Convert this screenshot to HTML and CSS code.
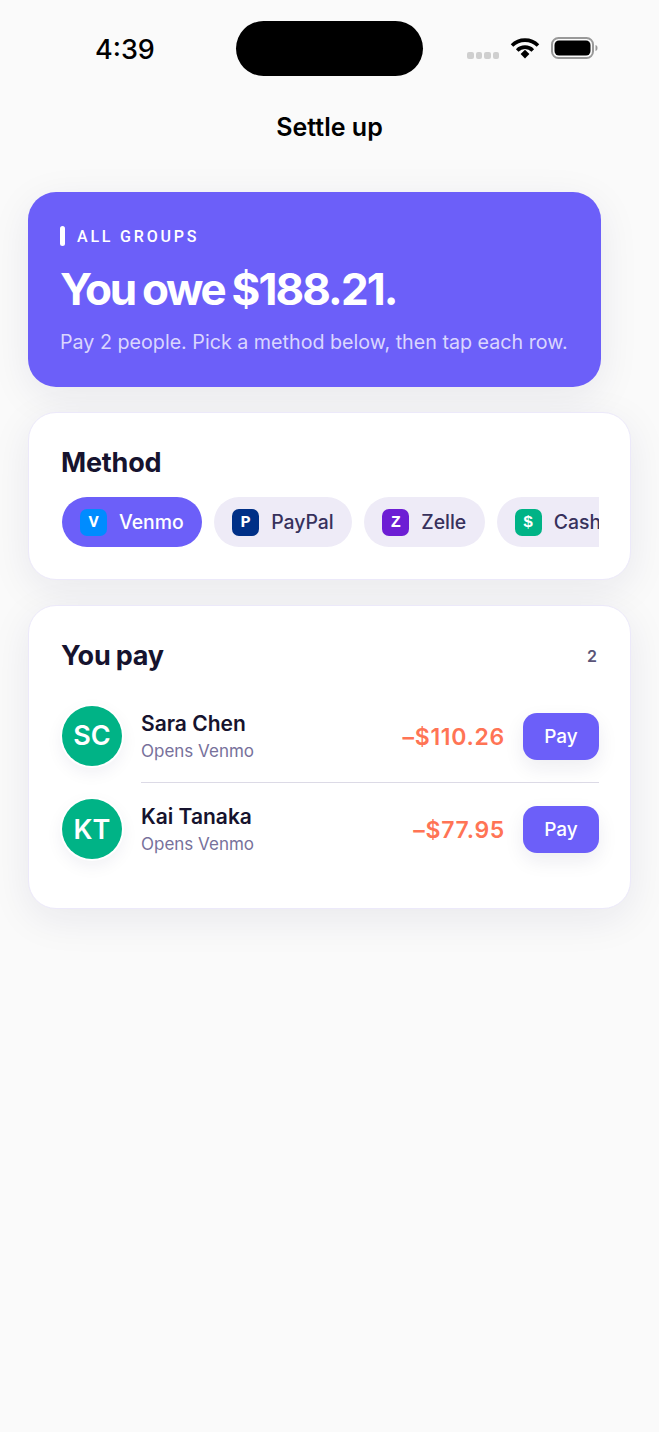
FILE: index.html
```html
<!DOCTYPE html>
<html>
<head>
    <meta charset="UTF-8">
    <title>Settle up</title>
    <link rel="stylesheet" href="styles.css">
</head>
<body>
    <div class="status-bar">
        <div class="status-time">4:39</div>
        <div class="status-island"></div>
        <div class="status-icons">
            <div class="signal-dots"><span></span><span></span><span></span><span></span></div>
            <svg class="wifi-icon" width="30" height="22" viewBox="0 0 30 22">
                <path d="M2 8.500a18.500 18.500 0 0 1 26 0" fill="none" stroke="#000" stroke-width="3.600"/>
                <path d="M7.200 13.400a11 11 0 0 1 15.600 0" fill="none" stroke="#000" stroke-width="3.600"/>
                <path d="M10.600 17l4.400-4.200 4.400 4.200L15 21.500z" fill="#000"/>
            </svg>
            <svg class="battery-icon" width="47" height="22" viewBox="0 0 47 22">
                <rect x="1" y="1" width="41" height="20" rx="6.500" fill="none" stroke="#999" stroke-width="2"/>
                <rect x="3.500" y="3.500" width="36" height="15" rx="4.500" fill="#000"/>
                <path d="M44.500 8c1.500.3 2 1.500 2 3s-.5 2.700-2 3z" fill="#999"/>
            </svg>
        </div>
    </div>

    <h1 class="page-title">Settle up</h1>

    <div class="page-content">
        <!-- Summary -->
        <div class="hero-card">
            <div class="hero-label"><span class="hero-tick"></span>ALL GROUPS</div>
            <div class="hero-amount">You owe <span class="hero-sum">$188.21.</span></div>
            <p class="hero-note">Pay 2 people. Pick a method below, then tap each row.</p>
        </div>

        <!-- Payment method -->
        <div class="panel method-panel">
            <h2 class="panel-title">Method</h2>
            <div class="method-list">
                <div class="method-pill method-active"><span class="method-icon venmo">V</span>Venmo</div>
                <div class="method-pill"><span class="method-icon paypal">P</span>PayPal</div>
                <div class="method-pill"><span class="method-icon zelle">Z</span>Zelle</div>
                <div class="method-pill"><span class="method-icon cash">$</span>Cash App</div>
            </div>
        </div>

        <!-- People to pay -->
        <div class="panel pay-panel">
            <div class="panel-header">
                <h2 class="panel-title">You pay</h2>
                <span class="panel-count">2</span>
            </div>
            <div class="pay-row">
                <div class="avatar">SC</div>
                <div class="pay-info">
                    <div class="pay-name">Sara Chen</div>
                    <div class="pay-sub">Opens Venmo</div>
                </div>
                <div class="pay-amount">–$110.26</div>
                <button class="pay-btn">Pay</button>
            </div>
            <div class="pay-row">
                <div class="avatar">KT</div>
                <div class="pay-info">
                    <div class="pay-name">Kai Tanaka</div>
                    <div class="pay-sub">Opens Venmo</div>
                </div>
                <div class="pay-amount">–$77.95</div>
                <button class="pay-btn">Pay</button>
            </div>
        </div>
    </div>
</body>
</html>
```
FILE: styles.css
```css
* {
    box-sizing: border-box;
}

body {
    margin: 0;
    min-height: 1432px;
    background-color: #fafafa;
    font-family: Inter, "Noto Sans", sans-serif;
    color: #16132e;
}

.status-bar {
    display: grid;
    grid-template-columns: 1fr 187px 1fr;
    align-items: center;
    height: 55px;
    margin-top: 21px;
}

.status-time {
    padding-left: 95px;
    padding-top: 2px;
    font-size: 27px;
    font-weight: 500;
    color: #000;
}

.status-island {
    height: 55px;
    border-radius: 28px;
    background-color: #000;
}

.status-icons {
    display: flex;
    align-items: center;
    padding-left: 44px;
}

.signal-dots {
    display: flex;
    gap: 2px;
    margin-top: 14px;
    margin-right: 11px;
}

.signal-dots span {
    width: 6.500px;
    height: 6.500px;
    border-radius: 2px;
    background-color: #cfcfcf;
}

.wifi-icon {
    margin-right: 11px;
    margin-top: -2px;
}

.battery-icon {
    margin-top: -1px;
}

.page-title {
    margin: 35px 0 0 0;
    text-align: center;
    font-size: 25px;
    line-height: 32px;
    font-weight: 600;
    color: #000;
}

.page-content {
    display: flex;
    flex-direction: column;
    padding: 49px 28px 0 28px;
}

.hero-card {
    width: 573px;
    height: 195px;
    padding: 34px 32px 0 32px;
    border-radius: 28px;
    background-color: #6c5ff9;
    color: #fff;
    box-shadow: 0 10px 40px rgba(30, 25, 80, 0.08);
}

.hero-label {
    display: flex;
    align-items: center;
    height: 20px;
    font-family: Roboto, sans-serif;
    font-size: 16px;
    font-weight: 500;
    letter-spacing: 2.800px;
}

.hero-tick {
    width: 5px;
    height: 20px;
    margin-right: 12px;
    border-radius: 3px;
    background-color: #fff;
}

.hero-amount {
    margin-top: 16px;
    font-size: 44px;
    line-height: 54px;
    font-weight: 700;
    letter-spacing: -2.300px;
    word-spacing: -1px;
}

.hero-sum {
    letter-spacing: -1.900px;
}

.hero-note {
    margin: 12px 0 0 0;
    font-size: 19.700px;
    line-height: 28px;
    color: #dad6fe;
    white-space: nowrap;
}

.panel {
    width: 603px;
    border: 1px solid #ece9fa;
    border-radius: 28px;
    background-color: #fff;
    box-shadow: 0 10px 40px rgba(30, 25, 80, 0.08);
}

.method-panel {
    height: 168px;
    margin-top: 25px;
    padding: 32px 31px 0 32px;
}

.panel-title {
    margin: 0;
    font-size: 27px;
    line-height: 36px;
    font-weight: 700;
    letter-spacing: -0.200px;
    word-spacing: -1px;
    color: #16132e;
}

.method-list {
    display: flex;
    gap: 12px;
    margin-top: 16px;
    margin-left: 1px;
    overflow: hidden;
    width: 537px;
}

.method-pill {
    display: flex;
    flex-shrink: 0;
    align-items: center;
    gap: 12px;
    height: 50px;
    padding: 0 18.500px 0 18px;
    border-radius: 25px;
    background-color: #eeebf7;
    font-size: 19.400px;
    font-weight: 500;
    color: #37315c;
    white-space: nowrap;
}

.method-active {
    background-color: #6c5ff9;
    color: #fff;
}

.method-icon {
    display: flex;
    align-items: center;
    justify-content: center;
    width: 27px;
    height: 27px;
    border-radius: 7px;
    font-family: "Liberation Mono", monospace;
    font-size: 17px;
    font-weight: 700;
    color: #fff;
}

.venmo {
    background-color: #008cff;
}

.paypal {
    background-color: #003087;
}

.zelle {
    background-color: #6d1ed4;
}

.cash {
    background-color: #00b386;
}

.pay-panel {
    height: 304px;
    margin-top: 25px;
    padding: 32px 31px 0 32px;
}

.panel-header {
    display: flex;
    align-items: center;
    justify-content: space-between;
    margin-bottom: 15px;
}

.panel-count {
    font-size: 16px;
    font-weight: 600;
    color: #5a5478;
    padding-right: 2px;
}

.pay-row {
    display: flex;
    align-items: center;
    height: 93.500px;
    position: relative;
}

.pay-row + .pay-row::before {
    content: "";
    position: absolute;
    left: 80px;
    right: 0;
    top: -1px;
    height: 1px;
    background-color: #dcdae6;
}

.avatar {
    display: flex;
    align-items: center;
    justify-content: center;
    flex-shrink: 0;
    width: 60px;
    height: 60px;
    margin-left: 1px;
    margin-right: 19px;
    border-radius: 50%;
    background-color: #00b386;
    font-size: 27px;
    font-weight: 600;
    color: #fff;
    box-shadow: 0 0 0 2px #fff, 0 6px 18px rgba(30, 25, 80, 0.07);
}

.pay-info {
    flex: 1;
}

.pay-name {
    padding-top: 1px;
    font-size: 21px;
    line-height: 28px;
    font-weight: 600;
    color: #16132e;
}

.pay-sub {
    margin-top: 1px;
    font-size: 17px;
    line-height: 24px;
    color: #77719b;
}

.pay-amount {
    margin-top: 2px;
    margin-right: 18px;
    font-size: 23px;
    font-weight: 600;
    letter-spacing: 0.700px;
    color: #ff7455;
}

.pay-btn {
    width: 76px;
    height: 47px;
    margin-top: 1px;
    border: none;
    border-radius: 14px;
    background-color: #6c5ff9;
    font-family: Inter, sans-serif;
    font-size: 19px;
    font-weight: 500;
    color: #fff;
    box-shadow: 0 8px 20px rgba(30, 25, 80, 0.08);
}
```
